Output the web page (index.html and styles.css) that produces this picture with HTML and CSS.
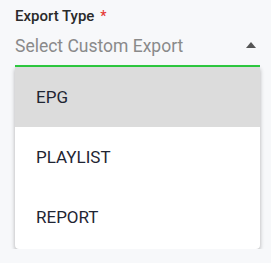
FILE: index.html
```html
<!DOCTYPE html>
<html lang="en">
<head>
    <meta charset="UTF-8">
    <meta name="viewport" content="width=device-width, initial-scale=1.0">
    <title>Export Type</title>
    <link rel="stylesheet" href="styles.css">
</head>
<body>
    <div class="field">
        <div class="label">Export Type <span class="required">*</span></div>
        <div class="select">
            <span class="placeholder">Select Custom Export</span>
            <span class="caret"></span>
        </div>
        <ul class="menu">
            <li class="item active">EPG</li>
            <li class="item">PLAYLIST</li>
            <li class="item">REPORT</li>
        </ul>
    </div>
</body>
</html>
```

FILE: styles.css
```css
body {
    margin: 0;
    background: #f7f8fa;
    font-family: Roboto, "Liberation Sans", sans-serif;
}
.field {
    margin: 0 11px 0 15px;
    padding-top: 7px;
}
.label {
    font-size: 15px;
    font-weight: 500;
    line-height: 18px;
    color: #2a2a2a;
}
.required {
    color: #e53935;
    font-size: 14px;
    margin-left: 2px;
}
.select {
    display: flex;
    justify-content: space-between;
    align-items: center;
    height: 40px;
    border-bottom: 2px solid #2ecc40;
}
.placeholder {
    font-size: 17.5px;
    color: #8a8a8a;
    padding-top: 2px;
}
.caret {
    width: 0;
    height: 0;
    margin-right: 4px;
    border-left: 5.5px solid transparent;
    border-right: 5.5px solid transparent;
    border-bottom: 6px solid #555;
}
.menu {
    list-style: none;
    margin: 0;
    padding: 0 0 2px;
    background: #fff;
    border-radius: 0 0 4px 4px;
    box-shadow: 0 2px 4px rgba(0, 0, 0, 0.3);
}
.item {
    height: 60px;
    display: flex;
    align-items: center;
    padding-left: 21px;
    font-size: 17px;
    color: #1f2533;
}
.item.active {
    background: #dcdcdc;
}
```
